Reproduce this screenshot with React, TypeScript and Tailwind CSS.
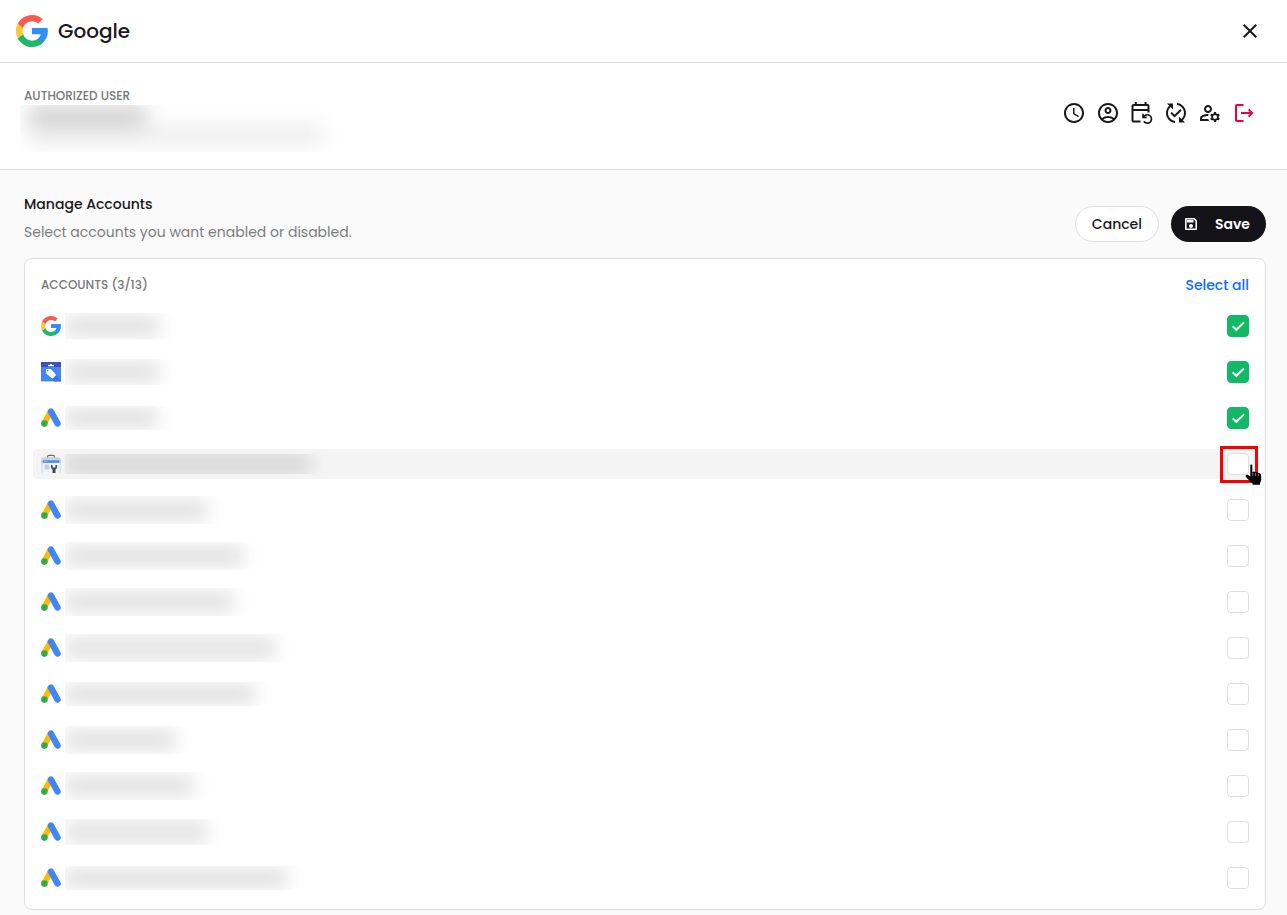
import { useState } from "react";
import {
  MdAccessTime,
  MdClose,
  MdOutlineAccountCircle,
  MdOutlineManageAccounts,
  MdPublishedWithChanges,
} from "react-icons/md";

type Service = "ads" | "business" | "console" | "google";

interface Account {
  enabled: boolean;
  height: number;
  id: number;
  nameWidth: number;
  service: Service;
}

const initialAccounts: Account[] = [
  { id: 1, service: "google", nameWidth: 94, height: 26, enabled: true },
  { id: 2, service: "business", nameWidth: 94, height: 26, enabled: true },
  { id: 3, service: "ads", nameWidth: 92, height: 24, enabled: true },
  { id: 4, service: "console", nameWidth: 246, height: 20, enabled: false },
  { id: 5, service: "ads", nameWidth: 142, height: 28, enabled: false },
  { id: 6, service: "ads", nameWidth: 178, height: 28, enabled: false },
  { id: 7, service: "ads", nameWidth: 168, height: 28, enabled: false },
  { id: 8, service: "ads", nameWidth: 210, height: 28, enabled: false },
  { id: 9, service: "ads", nameWidth: 190, height: 24, enabled: false },
  { id: 10, service: "ads", nameWidth: 110, height: 28, enabled: false },
  { id: 11, service: "ads", nameWidth: 128, height: 28, enabled: false },
  { id: 12, service: "ads", nameWidth: 142, height: 26, enabled: false },
  { id: 13, service: "ads", nameWidth: 222, height: 24, enabled: false },
];

const HOVERED_ID = 4;

const CalendarRepeatIcon = ({ className }: { className: string }) => (
  <svg
    aria-hidden="true"
    className={className}
    fill="none"
    stroke="currentColor"
    strokeWidth="2"
    viewBox="0 0 24 24"
  >
    <path d="M10.5 20.5h-7a1 1 0 0 1-1-1V5a1 1 0 0 1 1-1h14a1 1 0 0 1 1 1v6.500M2.500 9h16M5.800 1v4M15.600 1v4" />
    <path d="M13.600 16a4.200 4.200 0 1 1 .2 4.300M13 12.800v3.700h3.800" strokeWidth="1.7" />
  </svg>
);

const LogoutIcon = ({ className }: { className: string }) => (
  <svg
    aria-hidden="true"
    className={className}
    fill="none"
    stroke="currentColor"
    strokeWidth="2"
    viewBox="0 0 24 24"
  >
    <path d="M11.5 4H5a1 1 0 0 0-1 1v14a1 1 0 0 0 1 1h6.500M9 12h11M16.600 8.400l3.600 3.600-3.600 3.600" />
  </svg>
);

const SaveIcon = () => (
  <svg aria-hidden="true" className="size-4" fill="none" viewBox="0 0 16 16">
    <path
      d="M2.800 2.800h8.400l2 2v8.400H2.800z"
      stroke="currentColor"
      strokeLinejoin="round"
      strokeWidth="1.6"
    />
    <path d="M4 4h6.500v2.500H4z" fill="currentColor" />
    <circle cx="8" cy="10" fill="currentColor" r="2" />
  </svg>
);

const actions = [
  { label: "History", Icon: MdAccessTime },
  { label: "Profile", Icon: MdOutlineAccountCircle },
  { label: "Reschedule", Icon: CalendarRepeatIcon },
  { label: "Refresh access", Icon: MdPublishedWithChanges },
  { label: "Manage users", Icon: MdOutlineManageAccounts },
];

const GoogleLogo = ({ className }: { className: string }) => (
  <svg aria-hidden="true" className={className} viewBox="1 1 22 22">
    <path
      d="M22.9 12.25c0-.78-.07-1.53-.2-2.35H12v4.36h5.92c-.26 1.37-1.04 2.53-2.21 3.31v2.77h3.57c2.08-1.92 3.62-4.74 3.62-8.09z"
      fill="#2f8ff5"
    />
    <path
      d="M12 23c2.97 0 5.46-.98 7.28-2.66l-3.57-2.77c-.98.66-2.23 1.06-3.71 1.06-2.86 0-5.29-1.93-6.16-4.53l-3.66 2.84C3.99 20.53 7.7 23 12 23z"
      fill="#1eb868"
    />
    <path
      d="M5.84 14.09c-.22-.66-.35-1.36-.35-2.09s.13-1.43.35-2.09L2.18 7.07C1.43 8.55 1 10.22 1 12s.43 3.45 1.18 4.93l3.66-2.84z"
      fill="#fdc733"
    />
    <path
      d="M12 5.38c1.62 0 3.06.56 4.21 1.64l3.15-3.15C17.45 2.09 14.97 1 12 1 7.7 1 3.99 3.47 2.18 7.07l3.66 2.84c.87-2.6 3.3-4.53 6.16-4.53z"
      fill="#f9594f"
    />
  </svg>
);

const AdsLogo = () => (
  <svg aria-hidden="true" className="size-5" viewBox="0 0 20 20">
    <path d="M9.7 3.4 3.4 15" stroke="#fbbc04" strokeWidth="5.8" />
    <path
      d="m9.9 3.5 6.6 12"
      stroke="#4285f4"
      strokeLinecap="round"
      strokeWidth="6.4"
    />
    <circle cx="3.4" cy="15.6" fill="#34a853" r="3.3" />
  </svg>
);

const BusinessLogo = () => (
  <svg aria-hidden="true" className="size-5" viewBox="0 0 20 20">
    <path d="M0 4h20v15.4H0z" fill="#4285f4" />
    <path d="m14.5 13 5.5 5.2v1.2h-6.5L10 16.5z" fill="#3a76e0" />
    <path d="M0 0h20v5H0z" fill="#3f51b5" />
    <path d="M7 3h1.6c.2-1.3 2.6-1.3 2.8 0H13v1.2H7z" fill="#fff" />
    <path
      d="M5 7.8c0-.5.3-.8.8-.8h3.4c.3 0 .6.1.8.3l4.6 5c.4.4.4.9 0 1.3L12 16.2c-.4.4-.9.4-1.3 0L5.3 11.5a1 1 0 0 1-.3-.7z"
      fill="#fff"
    />
    <circle cx="6.8" cy="8.8" fill="#4285f4" r=".8" />
  </svg>
);

const ConsoleLogo = () => (
  <svg aria-hidden="true" className="size-5" viewBox="0 0 20 20">
    <path
      d="M6.6 4V2.8c0-.8.6-1.4 1.4-1.4h4c.8 0 1.4.6 1.4 1.4V4"
      fill="none"
      stroke="#6b6b6b"
      strokeWidth="1.3"
    />
    <path
      d="M3.5 3.3h13c2 0 3.5 1.5 3.5 3.4V18a1 1 0 0 1-1 1H1a1 1 0 0 1-1-1V6.7c0-1.9 1.5-3.4 3.5-3.4z"
      fill="#cfd1d2"
    />
    <path d="M0 9h20v9.2a.8.8 0 0 1-.8.8H.8a.8.8 0 0 1-.8-.8z" fill="#e2e4e6" />
    <path d="M2 6.5h16V19H2z" fill="#eef4fd" />
    <path d="M1.8 6.3h16.4v2.5H1.8z" fill="#4285f4" />
    <path d="M3.2 7.2h1.2V8H3.2zM5.2 7.2h1V8h-1z" fill="#b9d1fb" />
    <path d="M3.6 10.6h4.6v5H3.6z" fill="#cdcdcd" />
    <path
      d="M10.3 10.8c-1.1 2-.1 4 1.2 4.7V19h3v-3.5c1.3-.7 2.3-2.7 1.2-4.7l-1.4.8v2h-2.6v-2z"
      fill="#4a4a4a"
    />
  </svg>
);

const ServiceLogo = ({ service }: { service: Service }) => {
  if (service === "google") return <GoogleLogo className="size-5" />;
  if (service === "business") return <BusinessLogo />;
  if (service === "console") return <ConsoleLogo />;
  return <AdsLogo />;
};

const HandCursor = () => (
  <svg
    aria-hidden="true"
    className="pointer-events-none absolute top-2.5 left-[18px] z-10 h-6 w-[17px]"
    viewBox="0 0 17 24"
  >
    <path
      d="M5.3 2.5c0-1.4 2-1.4 2 0V9l1.5-.6 1.8.8 1.600-.2 1.400 1 1.300.2c.9.5 1.300 1.200 1.300 2.400v4.200c0 1.200-.7 2.200-1.200 3.400v1.600H7.600v-1.400L4.600 18 .8 13.800c-.7-1.300.5-2.500 1.900-2l2.600 1.600z"
      fill="#000"
    />
    <path
      d="M7.8 9.5V13M10.6 10v3M13.3 10.7v2.600"
      stroke="#fff"
      strokeWidth=".5"
    />
  </svg>
);

interface AccountRowProps {
  account: Account;
  hovered: boolean;
  onToggle: () => void;
}

const AccountRow = ({ account, hovered, onToggle }: AccountRowProps) => {
  return (
    <li
      className={`flex h-[30px] items-center rounded-sm px-2 ${
        hovered ? "bg-[#f4f4f4]" : ""
      }`}
    >
      <ServiceLogo service={account.service} />
      <div
        className="ml-1 flex items-center overflow-hidden"
        style={{ height: account.height, width: account.nameWidth + 24 }}
      >
        <div
          className="h-5 shrink-0 bg-black/12 blur-[9px]"
          style={{ width: account.nameWidth }}
        />
      </div>
      <div className="relative ml-auto size-[22px]">
        <input
          aria-label={`Enable account ${account.id}`}
          checked={account.enabled}
          className="block size-[22px] appearance-none rounded border border-[#dedede] bg-white checked:border-[#12b866] checked:bg-[#12b866]"
          onChange={onToggle}
          type="checkbox"
        />
        {account.enabled && (
          <svg
            aria-hidden="true"
            className="pointer-events-none absolute inset-0 size-[22px]"
            fill="none"
            stroke="#fff"
            strokeWidth="2"
            viewBox="0 0 22 22"
          >
            <path d="m5.700 11.300 3.600 3.500 7.700-7.400" />
          </svg>
        )}
        {hovered && (
          <>
            <span className="pointer-events-none absolute -top-[7px] -right-[9px] -bottom-2 -left-[7px] border-3 border-[#fa0000]" />
            <HandCursor />
          </>
        )}
      </div>
    </li>
  );
};

export default function App() {
  const [accounts, setAccounts] = useState(initialAccounts);
  const enabledCount = accounts.filter((account) => account.enabled).length;

  const toggle = (id: number) =>
    setAccounts((prev) =>
      prev.map((account) =>
        account.id === id ? { ...account, enabled: !account.enabled } : account
      )
    );

  const selectAll = () =>
    setAccounts((prev) => prev.map((account) => ({ ...account, enabled: true })));

  return (
    <div className="min-h-screen bg-[#fafafa] font-[Poppins,Inter,sans-serif] text-[#18181b]">
      <header className="flex h-[63px] items-center border-b border-[#dedede] bg-white pr-[25px] pl-4">
        <GoogleLogo className="size-8" />
        <h1 className="ml-2.5 text-xl font-medium">Google</h1>
        <button aria-label="Close" className="ml-auto" type="button">
          <MdClose className="size-6" />
        </button>
      </header>

      <section className="flex items-start justify-between border-b border-[#dedede] bg-white pt-6 pr-[31px] pb-[17px] pl-5">
        <div>
          <h2 className="pl-1 text-xs leading-[18px] font-medium text-[#777]">
            AUTHORIZED USER
          </h2>
          <div className="h-[47px] w-[320px] overflow-hidden">
            <div className="ml-2 h-5 w-[118px] bg-black/18 blur-[10px]" />
            <div className="ml-2 h-5 w-[294px] bg-black/7 blur-[10px]" />
          </div>
        </div>
        <div className="mt-[14px] flex gap-2.5">
          {actions.map(({ label, Icon }) => (
            <button aria-label={label} key={label} type="button">
              <Icon className="size-6" />
            </button>
          ))}
          <button aria-label="Log out" className="text-[#f0003f]" type="button">
            <LogoutIcon className="size-6" />
          </button>
        </div>
      </section>

      <main className="pt-5 pr-[21px] pb-[5px] pl-6">
        <div className="flex items-end justify-between">
          <div className="text-sm leading-7">
            <h2 className="font-medium">Manage Accounts</h2>
            <p className="text-[#7d7d7d]">
              Select accounts you want enabled or disabled.
            </p>
          </div>
          <div className="mb-1 flex gap-3 text-sm font-medium">
            <button
              className="h-9 rounded-full border border-[#dedede] bg-white px-4"
              type="button"
            >
              Cancel
            </button>
            <button
              className="flex h-9 items-center gap-4 rounded-full bg-[#131318] pr-4 pl-3 font-semibold text-white"
              type="button"
            >
              <SaveIcon />
              Save
            </button>
          </div>
        </div>

        <div className="mt-3 rounded-lg border border-[#dedede] bg-white px-2 pb-4">
          <div className="flex h-[52px] items-center justify-between px-2">
            <h3 className="text-xs font-medium text-[#777]">
              ACCOUNTS ({enabledCount}/{accounts.length})
            </h3>
            <button
              className="text-sm font-medium text-[#0d6efd]"
              onClick={selectAll}
              type="button"
            >
              Select all
            </button>
          </div>
          <ul className="flex flex-col gap-4">
            {accounts.map((account) => (
              <AccountRow
                account={account}
                hovered={account.id === HOVERED_ID}
                key={account.id}
                onToggle={() => toggle(account.id)}
              />
            ))}
          </ul>
        </div>
      </main>
    </div>
  );
}
